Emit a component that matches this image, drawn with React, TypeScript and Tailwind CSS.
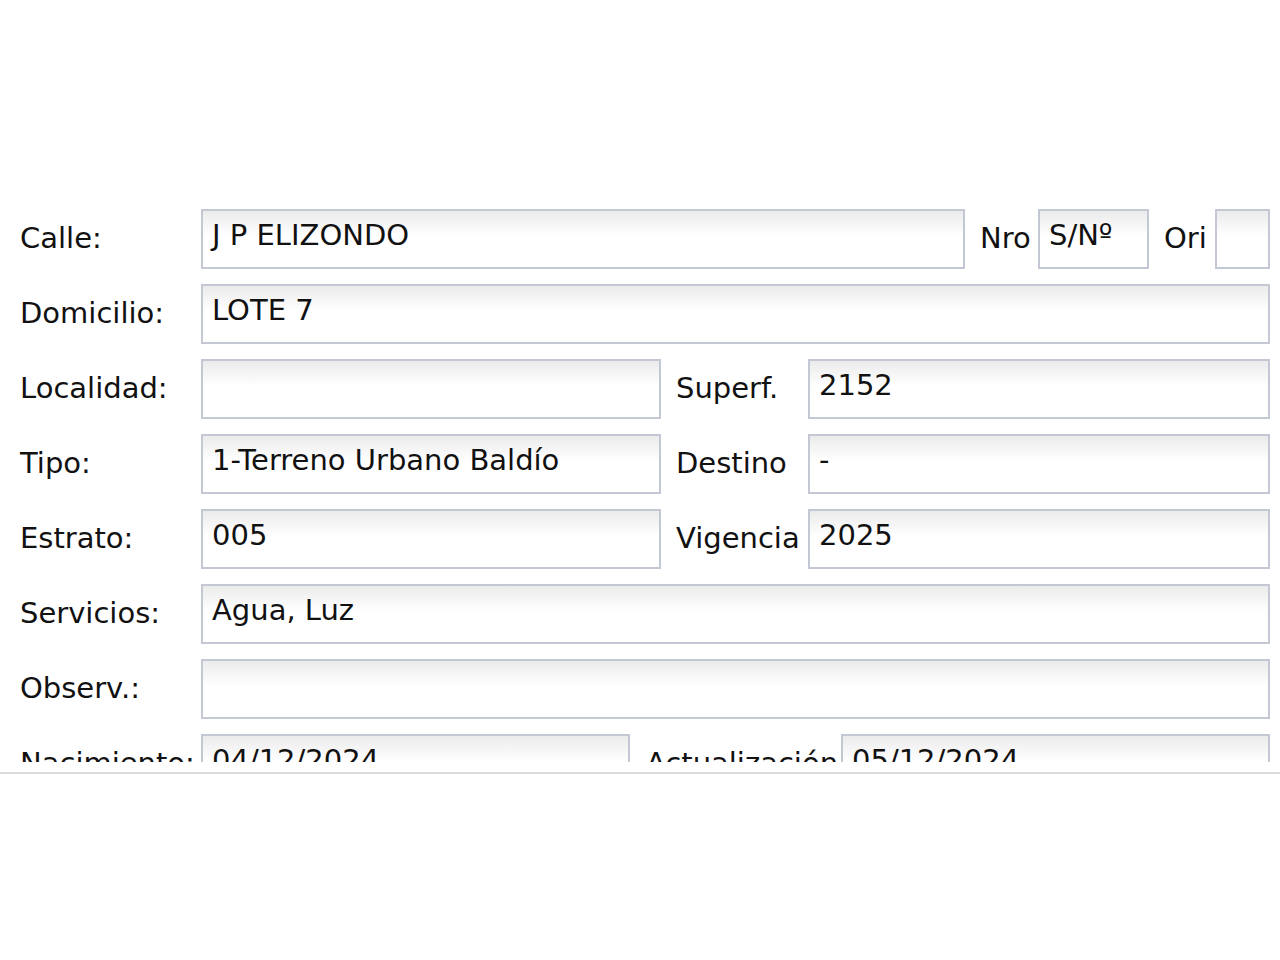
import React from 'react'

const box = "h-[60px] border-2 border-[#c4c7d4] bg-linear-to-b from-[#ebebeb] via-white via-45% to-white pl-[9px] flex items-center whitespace-nowrap overflow-hidden"
const label = "whitespace-nowrap flex items-center h-[60px]"

function Field({ value, className }: { value?: string; className: string }) {
    return (
        <div className={`${box} ${className}`}>
            <span className="-mt-[6px]">{value}</span>
        </div>
    )
}

export default function App() {
    return (
        <div className="w-[1280px] h-[960px] bg-white text-[#111] text-[29px] font-['DejaVu_Sans','Verdana',sans-serif]">
            <div className="h-[762px] overflow-hidden pt-[209px] pl-[20px] pr-[10px] flex flex-col gap-[15px]">
                <div className="flex">
                    <div className={`${label} w-[181px]`}>Calle:</div>
                    <Field className="w-[764px]" value="J P ELIZONDO" />
                    <div className={`${label} ml-[15px] w-[58px]`}>Nro</div>
                    <Field className="w-[111px]" value="S/Nº" />
                    <div className={`${label} ml-[15px] w-[51px]`}>Ori</div>
                    <Field className="flex-1" />
                </div>
                <div className="flex">
                    <div className={`${label} w-[181px]`}>Domicilio:</div>
                    <Field className="flex-1" value="LOTE 7" />
                </div>
                <div className="flex">
                    <div className={`${label} w-[181px]`}>Localidad:</div>
                    <Field className="w-[460px]" />
                    <div className={`${label} ml-[15px] w-[132px]`}>Superf.</div>
                    <Field className="flex-1" value="2152" />
                </div>
                <div className="flex">
                    <div className={`${label} w-[181px]`}>Tipo:</div>
                    <Field className="w-[460px]" value="1-Terreno Urbano Baldío" />
                    <div className={`${label} ml-[15px] w-[132px]`}>Destino</div>
                    <Field className="flex-1" value="-" />
                </div>
                <div className="flex">
                    <div className={`${label} w-[181px]`}>Estrato:</div>
                    <Field className="w-[460px]" value="005" />
                    <div className={`${label} ml-[15px] w-[132px]`}>Vigencia</div>
                    <Field className="flex-1" value="2025" />
                </div>
                <div className="flex">
                    <div className={`${label} w-[181px]`}>Servicios:</div>
                    <Field className="flex-1" value="Agua, Luz" />
                </div>
                <div className="flex">
                    <div className={`${label} w-[181px]`}>Observ.:</div>
                    <Field className="flex-1" />
                </div>
                <div className="flex">
                    <div className={`${label} w-[181px]`}>Nacimiento:</div>
                    <Field className="w-[429px]" value="04/12/2024" />
                    <div className={`${label} ml-[16px] w-[195px]`}>Actualización</div>
                    <Field className="flex-1" value="05/12/2024" />
                </div>
            </div>
            <div className="mt-[10px] h-[2px] bg-[#dcdcdc]" />
        </div>
    )
}
